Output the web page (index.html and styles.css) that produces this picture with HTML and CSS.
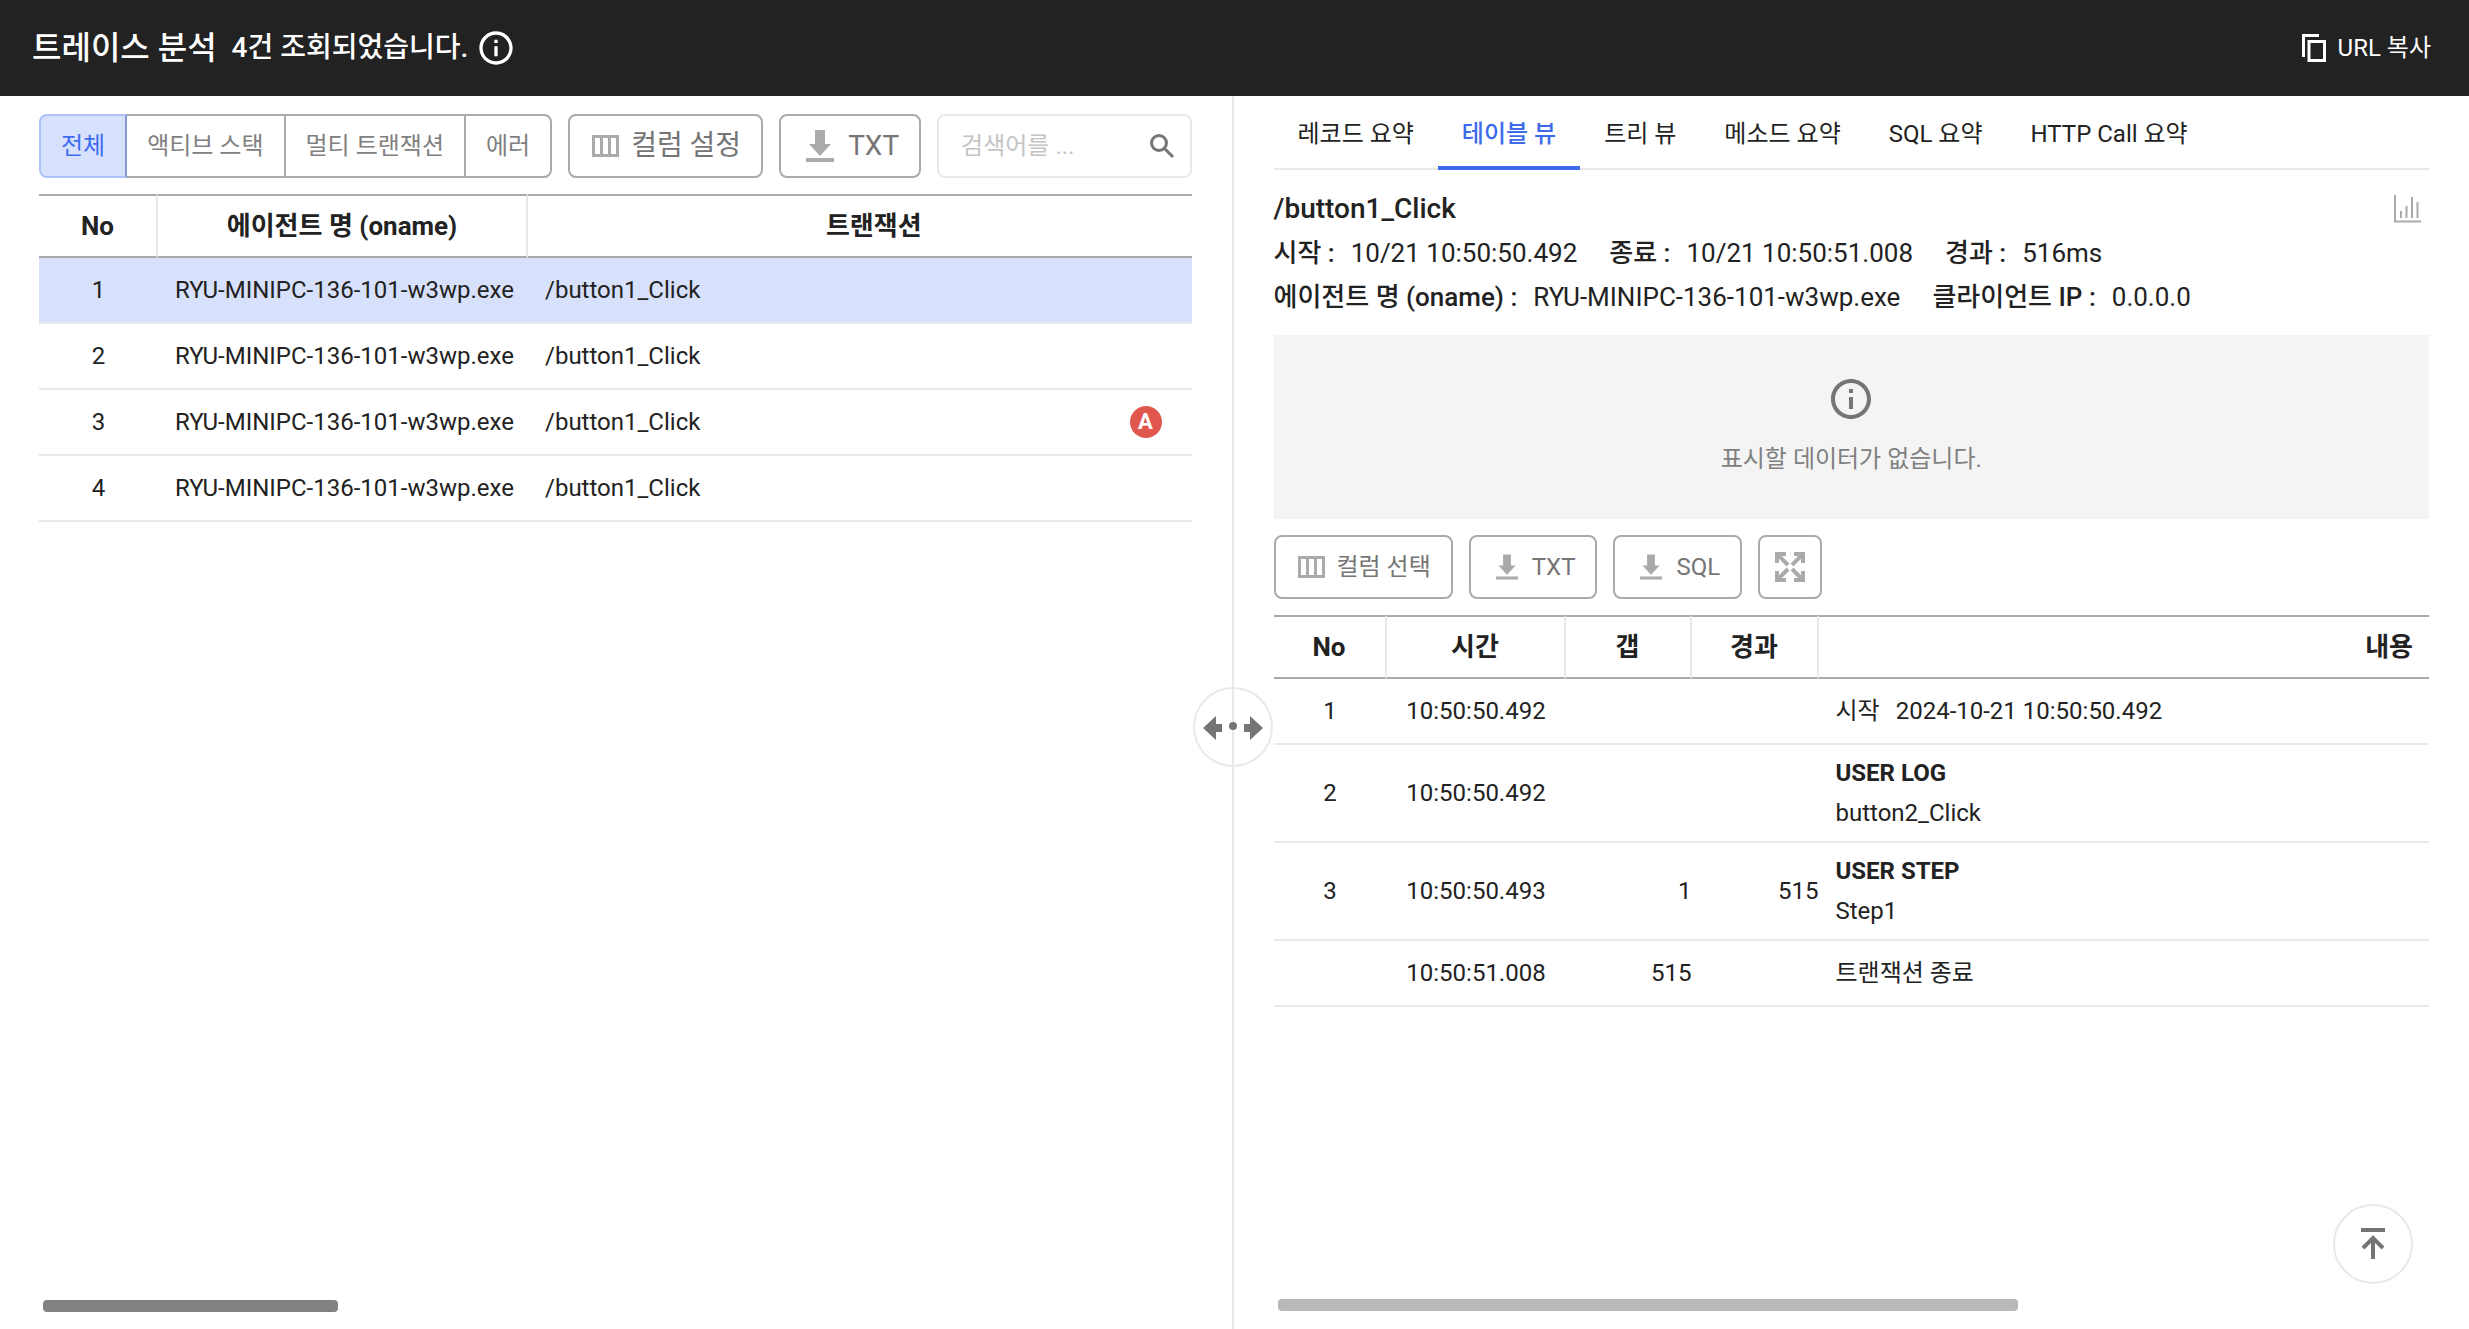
FILE: index.html
```html
<!DOCTYPE html>
<html lang="ko">
<head>
<meta charset="UTF-8">
<meta name="viewport" content="width=device-width, initial-scale=1.0">
<title>트레이스 분석</title>
<link rel="stylesheet" href="styles.css">
</head>
<body>
<header class="header">
  <h1>트레이스 분석</h1>
  <span class="count">4건 조회되었습니다.</span>
  <svg class="icon-info" viewBox="0 0 24 24"><path d="M11 7h2v2h-2zm0 4h2v6h-2zm1-9C6.48 2 2 6.48 2 12s4.48 10 10 10 10-4.48 10-10S17.52 2 12 2zm0 18c-4.41 0-8-3.59-8-8s3.59-8 8-8 8 3.59 8 8-3.59 8-8 8z"/></svg>
  <button class="copy-url">
    <svg viewBox="0 0 24 28"><path d="M1.500 23V1.500H17M7 7.500H22.500V26.500H7z"/></svg>
    URL 복사
  </button>
</header>

<main class="split">
  <section class="pane pane-left">
    <div class="toolbar">
      <div class="filter">
        <button class="active">전체</button>
        <button>액티브 스택</button>
        <button>멀티 트랜잭션</button>
        <button>에러</button>
      </div>
      <button class="btn btn-lg">
        <svg class="icon-column" viewBox="0 0 27 22"><path d="M1.500 1.500h24v19h-24zM9.500 1v20M17.500 1v20"/></svg>
        컬럼 설정
      </button>
      <button class="btn btn-lg">
        <svg class="icon-down" viewBox="0 0 28 32"><path d="M9 0h10v14h6L14 26 3 14h6zM0 28h28v4H0z"/></svg>
        TXT
      </button>
      <div class="search">
        <input type="text" placeholder="검색어를 ..." aria-label="검색어">
        <svg viewBox="0 0 24 24"><circle cx="9" cy="9" r="7.500"/><path d="M14.500 14.500L23 23"/></svg>
      </div>
    </div>

    <table class="list">
      <colgroup><col class="col-no"><col class="col-agent"><col></colgroup>
      <thead>
        <tr><th>No</th><th>에이전트 명 (oname)</th><th class="th-tx">트랜잭션</th></tr>
      </thead>
      <tbody>
        <tr class="selected"><td class="center">1</td><td>RYU-MINIPC-136-101-w3wp.exe</td><td>/button1_Click</td></tr>
        <tr><td class="center">2</td><td>RYU-MINIPC-136-101-w3wp.exe</td><td>/button1_Click</td></tr>
        <tr><td class="center">3</td><td>RYU-MINIPC-136-101-w3wp.exe</td><td><div class="tx">/button1_Click <span class="badge">A</span></div></td></tr>
        <tr><td class="center">4</td><td>RYU-MINIPC-136-101-w3wp.exe</td><td>/button1_Click</td></tr>
      </tbody>
    </table>
    <div class="scrollbar scrollbar-left"></div>
  </section>

  <section class="pane pane-right">
    <nav class="tabs">
      <a href="#">레코드 요약</a>
      <a href="#" class="active">테이블 뷰</a>
      <a href="#">트리 뷰</a>
      <a href="#">메소드 요약</a>
      <a href="#">SQL 요약</a>
      <a href="#">HTTP Call 요약</a>
    </nav>

    <div class="title">
      <h2>/button1_Click</h2>
      <svg viewBox="0 0 27 28"><path d="M1 0v26.500h26M7 16v7M12.500 11v12M18 2v21M23.500 7v16"/></svg>
    </div>
    <dl class="info">
      <div><dt>시작 :</dt><dd>10/21 10:50:50.492</dd></div>
      <div><dt>종료 :</dt><dd>10/21 10:50:51.008</dd></div>
      <div><dt>경과 :</dt><dd>516ms</dd></div>
    </dl>
    <dl class="info">
      <div><dt>에이전트 명 (oname) :</dt><dd>RYU-MINIPC-136-101-w3wp.exe</dd></div>
      <div><dt>클라이언트 IP :</dt><dd>0.0.0.0</dd></div>
    </dl>

    <div class="empty">
      <svg class="icon-info" viewBox="0 0 24 24"><path d="M11 7h2v2h-2zm0 4h2v6h-2zm1-9C6.48 2 2 6.48 2 12s4.48 10 10 10 10-4.48 10-10S17.52 2 12 2zm0 18c-4.41 0-8-3.59-8-8s3.59-8 8-8 8 3.59 8 8-3.59 8-8 8z"/></svg>
      <p>표시할 데이터가 없습니다.</p>
    </div>

    <div class="toolbar">
      <button class="btn">
        <svg class="icon-column" viewBox="0 0 27 22"><path d="M1.500 1.500h24v19h-24zM9.500 1v20M17.500 1v20"/></svg>
        컬럼 선택
      </button>
      <button class="btn">
        <svg class="icon-down" viewBox="0 0 28 32"><path d="M9 0h10v14h6L14 26 3 14h6zM0 28h28v4H0z"/></svg>
        TXT
      </button>
      <button class="btn">
        <svg class="icon-down" viewBox="0 0 28 32"><path d="M9 0h10v14h6L14 26 3 14h6zM0 28h28v4H0z"/></svg>
        SQL
      </button>
      <button class="btn btn-icon" aria-label="전체 화면">
        <svg class="icon-expand" viewBox="0 0 30 30"><path d="M2 11V2H11M2 2l11 11M19 2h9V11M28 2L17 13M2 19v9H11M2 28l11-11M28 19v9H19M28 28L17 17"/></svg>
      </button>
    </div>

    <table class="detail">
      <colgroup><col class="col-seq"><col class="col-time"><col class="col-gap"><col class="col-elapsed"><col></colgroup>
      <thead>
        <tr><th>No</th><th>시간</th><th>갭</th><th>경과</th><th class="th-content">내용</th></tr>
      </thead>
      <tbody>
        <tr><td class="center">1</td><td class="center">10:50:50.492</td><td></td><td></td><td><span class="label">시작</span>2024-10-21 10:50:50.492</td></tr>
        <tr class="two-line"><td class="center">2</td><td class="center">10:50:50.492</td><td></td><td></td><td><strong>USER LOG</strong><br>button2_Click</td></tr>
        <tr class="two-line"><td class="center">3</td><td class="center">10:50:50.493</td><td class="num">1</td><td class="num">515</td><td><strong>USER STEP</strong><br>Step1</td></tr>
        <tr><td></td><td class="center">10:50:51.008</td><td class="num">515</td><td></td><td>트랜잭션 종료</td></tr>
      </tbody>
    </table>
    <div class="scrollbar scrollbar-right"></div>
  </section>

  <button class="handle" aria-label="크기 조절">
    <svg viewBox="0 0 60 24"><path d="M0 13L13 1v8h6v8h-6v8zM60 13L47 1v8h-6v8h6v8z"/><circle cx="30" cy="11" r="4"/></svg>
  </button>
  <button class="to-top" aria-label="맨 위로">
    <svg viewBox="0 0 24 32"><path d="M0 2h24M12 31V10M2 20l10-10 10 10"/></svg>
  </button>
</main>
</body>
</html>
```
FILE: styles.css
```css
* { box-sizing: border-box; }
body {
  display: flex;
  flex-direction: column;
  min-height: 100vh;
  margin: 0;
  background: #fff;
  color: #222;
  font-family: Roboto, "Noto Sans CJK KR", sans-serif;
  font-size: 24px;
  line-height: 40px;
}
button, input { font: inherit; }
button { cursor: pointer; }
svg { display: block; flex: none; fill: none; overflow: visible; }

.header {
  display: flex;
  align-items: center;
  height: 96px;
  padding: 0 38px 0 32px;
  background: #222;
  color: #fff;
}
.header h1 {
  margin: 0 15px 0 0;
  font-size: 32px;
  font-weight: 500;
}
.count {
  margin-right: 8px;
  font-size: 28px;
  font-weight: 500;
}
.icon-info { width: 40px; height: 40px; fill: currentColor; }
.copy-url {
  display: flex;
  align-items: center;
  gap: 12px;
  margin-left: auto;
  padding: 0;
  border: none;
  background: none;
  color: #fff;
}
.copy-url svg { width: 24px; height: 28px; stroke: #fff; stroke-width: 3; }

.split {
  position: relative;
  display: grid;
  grid-template-columns: calc(50% - 1px) 1fr;
  flex: 1;
}
.pane {
  display: flex;
  flex-direction: column;
  min-width: 0;
  padding: 0 40px 18px;
}
.pane-left {
  padding-bottom: 17px;
  padding-left: 39px;
  border-right: 2px solid #e9e9e9;
}

/* toolbars */
.toolbar { display: flex; gap: 16px; margin: 16px 0; }
.pane-left .toolbar { margin-top: 18px; }
.filter { display: flex; }
.filter button {
  height: 64px;
  margin-left: -2px;
  padding: 0 20px;
  border: 2px solid #aaa;
  background: #fff;
  color: #808080;
}
.filter button:first-child { margin-left: 0; border-radius: 8px 0 0 8px; }
.filter button:last-child { border-radius: 0 8px 8px 0; }
.filter .active {
  z-index: 1;
  border-color: #adc2fb;
  border-right-color: #8397d3;
  background: #d7e1fc;
  color: #3f6df0;
}
.btn {
  display: flex;
  align-items: center;
  gap: 12px;
  height: 64px;
  padding: 0 20px 0 22px;
  border: 2px solid #aaa;
  border-radius: 8px;
  background: #fff;
  color: #757575;
}
.btn-lg { font-size: 28px; }
.btn-icon { padding: 0 15px; }
.icon-column { width: 27px; height: 22px; stroke: #aaa; stroke-width: 3; }
.icon-down { width: 22px; height: 26px; margin: 0 2px 0 3px; fill: #aaa; }
.btn-lg .icon-down { width: 28px; height: 32px; }
.icon-expand { width: 30px; height: 30px; stroke: #aaa; stroke-width: 4; }
.search {
  display: flex;
  flex: 1;
  align-items: center;
  min-width: 0;
  height: 64px;
  padding: 0 16px 0 22px;
  border: 2px solid #e9e9e9;
  border-radius: 8px;
}
.search input {
  flex: 1;
  min-width: 0;
  padding: 0;
  border: none;
  outline: none;
  background: none;
}
.search input::placeholder { color: #c4c4c4; }
.search svg { width: 24px; height: 24px; stroke: #757575; stroke-width: 3; }

/* tables */
table {
  width: 100%;
  table-layout: fixed;
  border-spacing: 0;
}
th {
  height: 64px;
  padding: 0 16px;
  border-top: 2px solid #aaa;
  border-bottom: 2px solid #aaa;
  border-right: 2px solid #e9e9e9;
  font-size: 26px;
  font-weight: 700;
}
th:last-child { border-right: none; }
td {
  padding: 12px 0 12px 17px;
  border-bottom: 2px solid #e9e9e9;
}
.two-line td { padding-top: 8px; padding-bottom: 8px; }
.selected td { background: #d7e1fc; }
.list .center, .detail .center { padding-left: 0; text-align: center; }
.num { padding-left: 0; text-align: right; }
.th-tx { padding-left: 44px; }
.th-content { text-align: right; }
.label { margin-right: 16px; }
.col-no { width: 119px; }
.col-agent { width: 370px; }
.col-seq { width: 113px; }
.col-time { width: 179px; }
.col-gap { width: 126px; }
.col-elapsed { width: 127px; }
.tx {
  display: flex;
  align-items: center;
  justify-content: space-between;
}
.badge {
  width: 32px;
  height: 32px;
  margin-right: 30px;
  border-radius: 50%;
  background: #e0584d;
  color: #fff;
  font-size: 22px;
  font-weight: 700;
  line-height: 32px;
  text-align: center;
}

/* right pane */
.tabs {
  display: flex;
  height: 74px;
  border-bottom: 2px solid #e9e9e9;
}
.tabs a {
  height: 74px;
  padding: 0 24px;
  color: #222;
  line-height: 76px;
  text-decoration: none;
}
.tabs .active {
  border-bottom: 4px solid #3d6bea;
  color: #3d6bea;
  font-weight: 500;
}
.title {
  display: flex;
  align-items: center;
  justify-content: space-between;
  margin-top: 17px;
  padding-right: 8px;
}
.title h2 {
  margin: 0;
  font-size: 28px;
  font-weight: 500;
  line-height: 44px;
}
.title svg { width: 27px; height: 28px; stroke: #aaa; stroke-width: 2; }
.info {
  display: flex;
  gap: 32px;
  margin: 0;
  font-size: 26px;
  line-height: 44px;
}
.info div { display: flex; gap: 16px; }
.info dt { font-weight: 500; }
.info dd { margin: 0; }
.empty {
  display: flex;
  flex-direction: column;
  align-items: center;
  height: 184px;
  margin-top: 16px;
  padding-top: 40px;
  background: #f4f4f4;
  color: #757575;
}
.empty .icon-info { width: 48px; height: 48px; }
.empty p { margin: 16px 0 0; color: #808080; }

.scrollbar { height: 12px; margin: auto 4px 0; border-radius: 4px; }
.scrollbar-left { width: 295px; background: #828282; }
.scrollbar-right { width: 740px; background: #b9b9b9; }

.handle, .to-top {
  position: absolute;
  display: flex;
  align-items: center;
  justify-content: center;
  width: 80px;
  height: 80px;
  padding: 0;
  border: 2px solid #e9e9e9;
  border-radius: 50%;
}
.handle {
  top: 591px;
  left: 50%;
  margin-left: -42px;
  background: none;
}
.handle svg { width: 60px; height: 24px; fill: #757575; }
.to-top { right: 56px; bottom: 45px; background: #fff; }
.to-top svg { width: 24px; height: 32px; stroke: #757575; stroke-width: 4; }
```
